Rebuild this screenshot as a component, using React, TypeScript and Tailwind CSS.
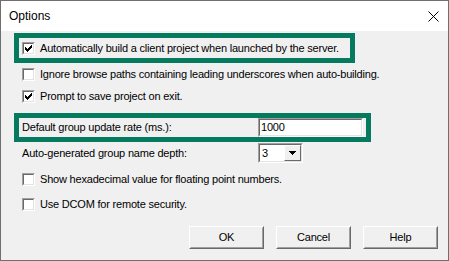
const Check = ({ checked }: { checked?: boolean }) => (
  <div className="h-[13px] w-[13px] shrink-0 border border-t-[#a0a0a0] border-l-[#a0a0a0] border-b-white border-r-white">
    <div className="h-full w-full border border-t-[#696969] border-l-[#696969] border-b-[#e3e3e3] border-r-[#e3e3e3] bg-white flex items-center justify-center">
      {checked && (
        <svg width="7" height="7" viewBox="0 0 7 7" shapeRendering="crispEdges">
          <path d="M0 2h1v3h-1zM1 3h1v3h-1zM2 4h1v3h-1zM3 3h1v3h-1zM4 2h1v3h-1zM5 1h1v3h-1zM6 0h1v3h-1z" fill="#000" />
        </svg>
      )}
    </div>
  </div>
);

const Row = ({ checked, label, className = "" }: { checked?: boolean; label: string; className?: string }) => (
  <div className={`flex items-center h-[22px] pl-[8px] ${className}`}>
    <Check checked={checked} />
    <span className="ml-[5px] whitespace-nowrap">{label}</span>
  </div>
);

const Button = ({ label }: { label: string }) => (
  <div className="w-[75px] h-[23px] border border-t-white border-l-white border-b-[#696969] border-r-[#696969]">
    <div className="h-full w-full border border-t-[#f0f0f0] border-l-[#f0f0f0] border-b-[#a0a0a0] border-r-[#a0a0a0] bg-[#f0f0f0] flex items-center justify-center">
      {label}
    </div>
  </div>
);

const App = () => {
  return (
    <div className="w-[449px] h-[261px] border border-[#6f6f6f] bg-[#f0f0f0] flex flex-col text-[11px] leading-none tracking-[-0.2px] text-black font-['Liberation_Sans',Arial,sans-serif] overflow-hidden">
      {/* Title bar */}
      <div className="h-[30px] bg-white flex items-center justify-between pl-[8px] pr-[9px] shrink-0 tracking-normal">
        <span className="text-[12px] pb-[1px]">Options</span>
        <svg width="11" height="11" viewBox="0 0 11 11">
          <path d="M0.5 0.5L10.5 10.5M10.5 0.5L0.5 10.5" stroke="#000" strokeWidth="1" />
        </svg>
      </div>

      {/* Body */}
      <div className="flex flex-col pl-[13px]">
        <div className="mt-[2px] w-[341px] h-[30px] border-[5px] border-[#067a5e] flex items-center">
          <div className="-ml-[5px]">
            <Row checked label="Automatically build a client project when launched by the server." />
          </div>
        </div>
        <Row label="Ignore browse paths containing leading underscores when auto-building." />
        <Row checked label="Prompt to save project on exit." />

        <div className="mt-[6px] w-[357px] h-[29px] border-[5px] border-[#067a5e] flex items-center">
          <span className="ml-[3px] w-[236px]">Default group update rate (ms.):</span>
          <div className="w-[105px] h-[19px] border border-t-[#a0a0a0] border-l-[#a0a0a0] border-b-white border-r-white">
            <div className="h-full w-full border border-t-[#696969] border-l-[#696969] border-b-[#e3e3e3] border-r-[#e3e3e3] bg-white flex items-center pl-[1px]">
              1000
            </div>
          </div>
        </div>

        <div className="flex items-center h-[22px]">
          <span className="ml-[8px] w-[236px]">Auto-generated group name depth:</span>
          <div className="w-[45px] h-[20px] border border-t-[#a0a0a0] border-l-[#a0a0a0] border-b-white border-r-white">
            <div className="h-full w-full border border-t-[#696969] border-l-[#696969] border-b-[#e3e3e3] border-r-[#e3e3e3] bg-white flex items-center">
              <span className="pl-[2px] flex-1">3</span>
              <div className="w-[17px] h-[16px] border border-t-white border-l-white border-b-[#696969] border-r-[#696969] bg-[#f0f0f0] flex items-center justify-center">
                <svg width="7" height="4" viewBox="0 0 7 4" shapeRendering="crispEdges">
                  <path d="M0 0h7v1h-7zM1 1h5v1h-5zM2 2h3v1h-3zM3 3h1v1h-1z" fill="#000" />
                </svg>
              </div>
            </div>
          </div>
        </div>

        <Row className="mt-[4px]" label="Show hexadecimal value for floating point numbers." />
        <Row className="mt-[3px]" label="Use DCOM for remote security." />

        <div className="mt-[11px] flex justify-end gap-[12px] pr-[10px]">
          <Button label="OK" />
          <Button label="Cancel" />
          <Button label="Help" />
        </div>
      </div>
    </div>
  );
};

export default App;
